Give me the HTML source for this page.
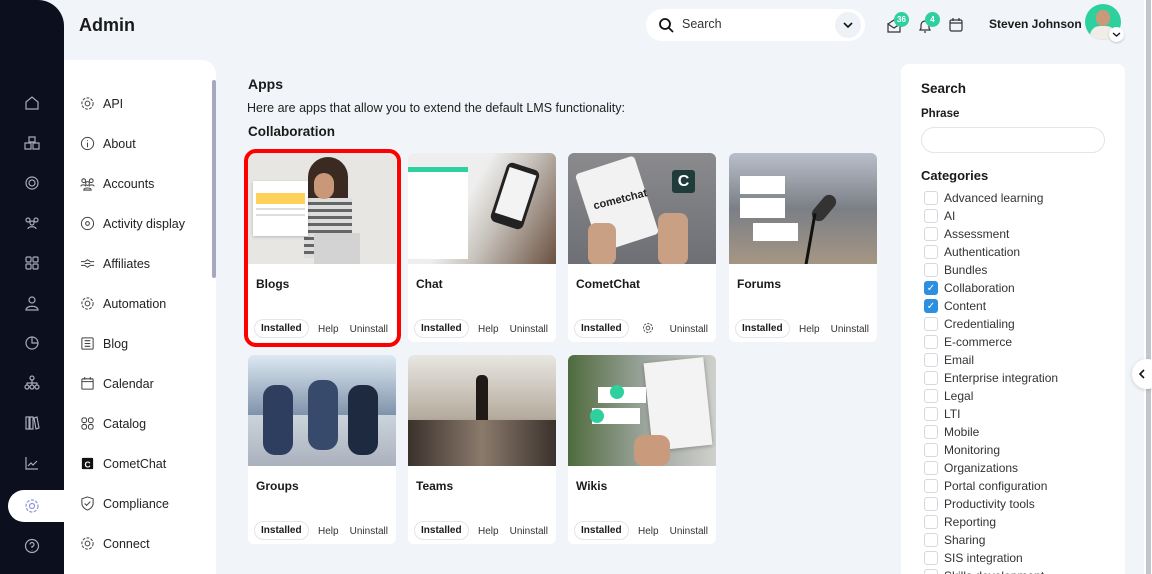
<!DOCTYPE html>
<html><head><meta charset="utf-8"><style>
*{box-sizing:border-box;margin:0;padding:0}
html,body{width:1152px;height:574px;overflow:hidden}
body{background:#f1f4f8;font-family:"Liberation Sans",sans-serif;color:#1a1a1a;position:relative}
.side{position:absolute;left:0;top:0;width:64px;height:574px;background:#0b0f1e;border-top-right-radius:26px}
.side svg{position:absolute;left:24px}
.act{position:absolute;left:8px;top:490px;width:56px;height:32px;background:#fff;border-radius:16px 0 0 16px}
.h1{position:absolute;left:79px;top:15px;font-size:18px;font-weight:bold}
.menu{position:absolute;left:64px;top:60px;width:152px;height:514px;background:#fff;border-top-right-radius:14px}
.mi{position:absolute;left:16px;font-size:12.5px;font-weight:500;display:flex;align-items:center;gap:8px;color:#222}
.mi svg{width:15px;height:15px}
.sb{position:absolute;left:212px;top:80px;width:4px;height:198px;background:#a6a9bd;border-radius:2px}
.srch{position:absolute;left:646px;top:9px;width:219px;height:32px;background:#fff;border-radius:16px;font-size:12.5px;color:#333}
.card{position:absolute;width:148px;height:189px;background:#fff;border-radius:6px;overflow:hidden}
.img{height:111px;position:relative;overflow:hidden}
.ct{position:absolute;left:8px;top:124px;font-weight:bold;font-size:12px}
.ins{position:absolute;left:6px;top:166px;border:1px solid #e2e4ee;border-radius:12px;font-size:10px;font-weight:bold;padding:3px 6px}
.hl{position:absolute;left:70px;top:171px;font-size:10px;color:#333}
.un{position:absolute;right:8px;top:171px;font-size:10px;color:#333}
.rp{position:absolute;left:901px;top:64px;width:224px;height:520px;background:#fff;border-radius:8px;overflow:hidden}
.cat{position:absolute;left:23px;font-size:12px;color:#333;display:flex;align-items:center;gap:6px}
.cb{width:14px;height:14px;border:1px solid #d6d8e0;border-radius:3px;background:#fff}
.cb.on{background:#2d8fe0;border-color:#2d8fe0;color:#fff;font-size:10px;text-align:center;line-height:13px}
</style></head><body>
<div class="side">
<div class="act"></div>
<svg style="top:95px" width="16" height="16" viewBox="0 0 16 16" fill="none" stroke="#aab" stroke-width="1.2"><path d="M2 7L8 2l6 5v7H2z"/></svg>
<svg style="top:135px" width="16" height="16" viewBox="0 0 16 16" fill="none" stroke="#aab" stroke-width="1.2"><path d="M5 2h6v5H5zM1 8h6v6H1zM9 8h6v6H9z"/></svg>
<svg style="top:175px" width="16" height="16" viewBox="0 0 16 16" fill="none" stroke="#aab" stroke-width="1.2"><circle cx="8" cy="8" r="6"/><circle cx="8" cy="8" r="3"/></svg>
<svg style="top:215px" width="16" height="16" viewBox="0 0 16 16" fill="none" stroke="#aab" stroke-width="1.2"><circle cx="4" cy="5" r="2"/><circle cx="12" cy="5" r="2"/><circle cx="8" cy="8" r="2"/><path d="M4 14c0-3 8-3 8 0"/></svg>
<svg style="top:255px" width="16" height="16" viewBox="0 0 16 16" fill="none" stroke="#aab" stroke-width="1.2"><rect x="2" y="2" width="5" height="5" rx="1"/><rect x="9" y="2" width="5" height="5" rx="1"/><rect x="2" y="9" width="5" height="5" rx="1"/><rect x="9" y="9" width="5" height="5" rx="1"/></svg>
<svg style="top:295px" width="16" height="16" viewBox="0 0 16 16" fill="none" stroke="#aab" stroke-width="1.2"><circle cx="8" cy="5" r="3"/><path d="M2 15c0-5 12-5 12 0z"/></svg>
<svg style="top:335px" width="16" height="16" viewBox="0 0 16 16" fill="none" stroke="#aab" stroke-width="1.2"><circle cx="8" cy="8" r="6"/><path d="M8 2v6h6"/></svg>
<svg style="top:375px" width="16" height="16" viewBox="0 0 16 16" fill="none" stroke="#aab" stroke-width="1.2"><circle cx="8" cy="3" r="2"/><circle cx="3" cy="12" r="2"/><circle cx="8" cy="12" r="2"/><circle cx="13" cy="12" r="2"/><path d="M8 5v5M3 10V8h10v2"/></svg>
<svg style="top:415px" width="16" height="16" viewBox="0 0 16 16" fill="none" stroke="#aab" stroke-width="1.2"><path d="M2 2h3v12H2zM6 2h3v12H6zM10 3l3-1 2 11-3 1z"/></svg>
<svg style="top:455px" width="16" height="16" viewBox="0 0 16 16" fill="none" stroke="#aab" stroke-width="1.2"><path d="M2 2v12h12M4 11l3-3 2 2 4-4"/></svg>
<svg style="top:498px" width="16" height="16" viewBox="0 0 16 16" fill="none" stroke="#8f95d6" stroke-width="1.2"><circle cx="8" cy="8" r="2.5"/><circle cx="8" cy="8" r="6" stroke-dasharray="3 1.5"/></svg>
<svg style="top:538px" width="16" height="16" viewBox="0 0 16 16" fill="none" stroke="#aab" stroke-width="1.2"><circle cx="8" cy="8" r="6.5"/><path d="M6 6.5a2 2 0 1 1 2 2v1.5M8 12v.5"/></svg>
</div>
<div class="h1">Admin</div>
<div class="menu">
<div class="mi" style="top:36px"><svg viewBox="0 0 16 16" fill="none" stroke="#444" stroke-width="1.1"><circle cx="8" cy="8" r="2.5"/><circle cx="8" cy="8" r="6" stroke-dasharray="3 1.5"/></svg>API</div>
<div class="mi" style="top:76px"><svg viewBox="0 0 16 16" fill="none" stroke="#444" stroke-width="1.1"><circle cx="8" cy="8" r="6.5"/><path d="M8 7v5M8 4.5v1"/></svg>About</div>
<div class="mi" style="top:116px"><svg viewBox="0 0 16 16" fill="none" stroke="#444" stroke-width="1.1"><circle cx="4" cy="5" r="2"/><circle cx="12" cy="5" r="2"/><circle cx="8" cy="8" r="2"/><path d="M1 11c0-2 5-2 5 0M10 11c0-2 5-2 5 0M4 15c0-3 8-3 8 0z"/></svg>Accounts</div>
<div class="mi" style="top:156px"><svg viewBox="0 0 16 16" fill="none" stroke="#444" stroke-width="1.1"><circle cx="8" cy="8" r="6.5"/><circle cx="8" cy="8" r="2"/></svg>Activity display</div>
<div class="mi" style="top:196px"><svg viewBox="0 0 16 16" fill="none" stroke="#444" stroke-width="1.1"><path d="M1 6h4l3-2 3 2h4M1 10h4l3 2 3-2h4M5 8h6"/></svg>Affiliates</div>
<div class="mi" style="top:236px"><svg viewBox="0 0 16 16" fill="none" stroke="#444" stroke-width="1.1"><circle cx="8" cy="8" r="2.5"/><circle cx="8" cy="8" r="6" stroke-dasharray="3 1.5"/></svg>Automation</div>
<div class="mi" style="top:276px"><svg viewBox="0 0 16 16" fill="none" stroke="#444" stroke-width="1.1"><rect x="2" y="2" width="12" height="12" rx="1"/><path d="M5 5h6M5 8h6M5 11h6"/></svg>Blog</div>
<div class="mi" style="top:316px"><svg viewBox="0 0 16 16" fill="none" stroke="#444" stroke-width="1.1"><rect x="2" y="3" width="12" height="11" rx="1"/><path d="M2 6h12M5 1v3M11 1v3"/></svg>Calendar</div>
<div class="mi" style="top:356px"><svg viewBox="0 0 16 16" fill="none" stroke="#444" stroke-width="1.1"><rect x="2" y="2" width="5" height="5" rx="2"/><rect x="9" y="2" width="5" height="5" rx="2"/><rect x="2" y="9" width="5" height="5" rx="2"/><rect x="9" y="9" width="5" height="5" rx="2"/></svg>Catalog</div>
<div class="mi" style="top:396px"><svg viewBox="0 0 16 16"><rect x="2" y="2" width="12" height="12" rx="1" fill="#111"/><text x="8" y="12" font-size="9" fill="#fff" text-anchor="middle" font-weight="bold" font-family="Liberation Sans">C</text></svg>CometChat</div>
<div class="mi" style="top:436px"><svg viewBox="0 0 16 16" fill="none" stroke="#444" stroke-width="1.1"><path d="M8 1l6 2v5c0 3-3 6-6 7-3-1-6-4-6-7V3z"/><path d="M5 8l2 2 4-4"/></svg>Compliance</div>
<div class="mi" style="top:476px"><svg viewBox="0 0 16 16" fill="none" stroke="#444" stroke-width="1.1"><circle cx="8" cy="8" r="2.5"/><circle cx="8" cy="8" r="6" stroke-dasharray="3 1.5"/></svg>Connect</div>
</div>
<div class="sb"></div>
<div class="srch"><svg style="position:absolute;left:12px;top:8px" width="16" height="16" viewBox="0 0 16 16" fill="none" stroke="#111" stroke-width="1.8"><circle cx="7" cy="7" r="5"/><path d="M11 11l4 4"/></svg><span style="position:absolute;left:36px;top:8px">Search</span><div style="position:absolute;right:4px;top:3px;width:26px;height:26px;border-radius:13px;background:#eef1f6"></div><svg style="position:absolute;right:11px;top:11px" width="12" height="10" viewBox="0 0 12 10" fill="none" stroke="#111" stroke-width="1.6"><path d="M2 3l4 4 4-4"/></svg></div>
<svg style="position:absolute;left:886px;top:18px" width="16" height="16" viewBox="0 0 16 16" fill="none" stroke="#333" stroke-width="1.2"><path d="M2 6l6 4 6-4v8H2z M2 6l6-4 6 4"/></svg>
<div style="position:absolute;left:894px;top:12px;width:15px;height:15px;border-radius:8px;background:#2ed19d;color:#fff;font-size:8px;font-weight:bold;text-align:center;line-height:15px">36</div>
<svg style="position:absolute;left:917px;top:18px" width="16" height="16" viewBox="0 0 16 16" fill="none" stroke="#333" stroke-width="1.2"><path d="M3 12h10l-1-2V7a4 4 0 0 0-8 0v3zM7 14h2"/></svg>
<div style="position:absolute;left:925px;top:12px;width:15px;height:15px;border-radius:8px;background:#2ed19d;color:#fff;font-size:8px;font-weight:bold;text-align:center;line-height:15px">4</div>
<svg style="position:absolute;left:948px;top:17px" width="16" height="16" viewBox="0 0 16 16" fill="none" stroke="#333" stroke-width="1.2"><rect x="2" y="3" width="12" height="11" rx="1.5"/><path d="M2 6h12M5 1v3M11 1v3"/></svg>
<div style="position:absolute;left:989px;top:17px;font-size:12px;font-weight:bold">Steven Johnson</div>
<div style="position:absolute;left:1085px;top:4px;width:36px;height:36px;border-radius:18px;background:#2ed19d;overflow:hidden"><div style="position:absolute;left:11px;top:6px;width:14px;height:16px;border-radius:7px;background:#c89a7a"></div><div style="position:absolute;left:5px;top:22px;width:26px;height:20px;border-radius:10px 10px 0 0;background:#f0ece6"></div></div>
<div style="position:absolute;left:1109px;top:27px;width:15px;height:15px;border-radius:8px;background:#fff;box-shadow:0 1px 2px rgba(0,0,0,.2)"><svg style="position:absolute;left:3px;top:4px" width="9" height="7" viewBox="0 0 9 7" fill="none" stroke="#111" stroke-width="1.3"><path d="M1 2l3.5 3L8 2"/></svg></div>
<div style="position:absolute;left:1144px;top:0;width:8px;height:574px;background:#fff"></div>
<div style="position:absolute;left:1146px;top:0;width:5px;height:574px;background:#c4c6ce"></div>

<div style="position:absolute;left:248px;top:76px;font-size:14px;font-weight:bold">Apps</div>
<div style="position:absolute;left:247px;top:101px;font-size:12.5px;color:#222">Here are apps that allow you to extend the default LMS functionality:</div>
<div style="position:absolute;left:248px;top:124px;font-size:13.5px;font-weight:bold">Collaboration</div>

<div class="card" style="left:248px;top:153px"><div class="img" style="background:#e7e6e3"><div style="position:absolute;left:60px;top:4px;width:40px;height:90px;border-radius:20px 20px 0 0;background:#3a2a22"></div><div style="position:absolute;left:56px;top:45px;width:48px;height:60px;background:repeating-linear-gradient(#ddd 0 4px,#666 4px 7px)"></div><div style="position:absolute;left:66px;top:20px;width:20px;height:26px;border-radius:10px;background:#c99879"></div><div style="position:absolute;left:66px;top:80px;width:46px;height:31px;background:#d3d3d3"></div><div style="position:absolute;left:5px;top:28px;width:55px;height:55px;background:#fff;box-shadow:0 1px 3px rgba(0,0,0,.2)"><div style="margin:12px 3px 0;height:11px;background:#ffd15a"></div><div style="margin:4px 3px;height:2px;background:#ddd"></div><div style="margin:4px 3px;height:2px;background:#ddd"></div></div></div><div class="ct">Blogs</div><div class="ins">Installed</div><div class="hl">Help</div><div class="un">Uninstall</div></div>
<div style="position:absolute;left:244px;top:149px;width:157px;height:198px;border:4px solid #f00;border-radius:12px"></div>

<div class="card" style="left:408px;top:153px"><div class="img" style="background:linear-gradient(120deg,#eee 40%,#c7c2bb 60%,#6a5040)"><div style="position:absolute;left:0;top:14px;width:60px;height:92px;background:#fff;border-top:5px solid #2ed19d"></div><div style="position:absolute;left:90px;top:12px;width:34px;height:62px;border-radius:6px;background:#222;transform:rotate(18deg)"><div style="margin:5px 3px;height:48px;background:#f3f3f3"></div></div></div><div class="ct">Chat</div><div class="ins">Installed</div><div class="hl">Help</div><div class="un">Uninstall</div></div>

<div class="card" style="left:568px;top:153px"><div class="img" style="background:linear-gradient(#8b8b8e,#6d6f74)"><div style="position:absolute;left:18px;top:10px;width:62px;height:82px;border-radius:4px;background:#f2f2f2;transform:rotate(-18deg)"><div style="position:absolute;left:8px;top:32px;font-size:11px;font-weight:bold;color:#222;transform:rotate(4deg)">cometchat</div></div><div style="position:absolute;left:104px;top:17px;width:23px;height:23px;border-radius:3px;background:#1f3b3a;color:#fff;font-weight:bold;font-size:16px;text-align:center;line-height:23px">C</div><div style="position:absolute;left:20px;top:70px;width:28px;height:42px;border-radius:8px;background:#caa084"></div><div style="position:absolute;left:90px;top:60px;width:30px;height:52px;border-radius:8px;background:#caa084"></div></div><div class="ct">CometChat</div><div class="ins">Installed</div><svg style="position:absolute;left:74px;top:169px" width="12" height="12" viewBox="0 0 16 16" fill="none" stroke="#555" stroke-width="1.3"><circle cx="8" cy="8" r="2.5"/><circle cx="8" cy="8" r="6" stroke-dasharray="3 1.5"/></svg><div class="un">Uninstall</div></div>

<div class="card" style="left:729px;top:153px"><div class="img" style="background:linear-gradient(#b9bfca,#7b7f86 50%,#a59683)"><div style="position:absolute;left:11px;top:23px;width:45px;height:18px;background:#fff"></div><div style="position:absolute;left:11px;top:45px;width:45px;height:20px;background:#fff"></div><div style="position:absolute;left:24px;top:70px;width:45px;height:18px;background:#fff"></div><div style="position:absolute;left:88px;top:40px;width:14px;height:30px;border-radius:7px;background:#333;transform:rotate(40deg)"></div><div style="position:absolute;left:80px;top:60px;width:3px;height:52px;background:#111;transform:rotate(10deg)"></div></div><div class="ct">Forums</div><div class="ins">Installed</div><div class="hl">Help</div><div class="un">Uninstall</div></div>

<div class="card" style="left:248px;top:355px"><div class="img" style="background:linear-gradient(#dde8f2,#8699b0 50%,#2c3d5a)"><div style="position:absolute;left:0;top:60px;width:148px;height:51px;background:#fff;opacity:.6"></div><div style="position:absolute;left:15px;top:30px;width:30px;height:70px;border-radius:12px;background:#2d3e5f"></div><div style="position:absolute;left:60px;top:25px;width:30px;height:70px;border-radius:12px;background:#384a6b"></div><div style="position:absolute;left:100px;top:30px;width:30px;height:70px;border-radius:12px;background:#1e2a40"></div></div><div class="ct">Groups</div><div class="ins">Installed</div><div class="hl">Help</div><div class="un">Uninstall</div></div>

<div class="card" style="left:408px;top:355px"><div class="img" style="background:linear-gradient(#e9e7e2,#b7ada0 55%,#5b4e44)"><div style="position:absolute;left:68px;top:20px;width:12px;height:55px;border-radius:5px;background:#1f1a18"></div><div style="position:absolute;left:0;top:65px;width:148px;height:46px;background:linear-gradient(90deg,#3b322c,#8a7a6c,#3b322c)"></div></div><div class="ct">Teams</div><div class="ins">Installed</div><div class="hl">Help</div><div class="un">Uninstall</div></div>

<div class="card" style="left:568px;top:355px"><div class="img" style="background:linear-gradient(90deg,#4f6b3d,#9aa39a 50%,#cfd0cc)"><div style="position:absolute;left:80px;top:5px;width:60px;height:88px;background:#f3f3f3;transform:rotate(-6deg);box-shadow:0 1px 4px rgba(0,0,0,.3)"></div><div style="position:absolute;left:30px;top:32px;width:48px;height:16px;background:#fff"></div><div style="position:absolute;left:42px;top:30px;width:14px;height:14px;border-radius:7px;background:#2ed19d"></div><div style="position:absolute;left:24px;top:53px;width:48px;height:16px;background:#fff"></div><div style="position:absolute;left:22px;top:54px;width:14px;height:14px;border-radius:7px;background:#2ed19d"></div><div style="position:absolute;left:66px;top:80px;width:36px;height:31px;border-radius:10px;background:#c99b7c"></div></div><div class="ct">Wikis</div><div class="ins">Installed</div><div class="hl">Help</div><div class="un">Uninstall</div></div>

<div class="rp">
<div style="position:absolute;left:20px;top:17px;font-size:13.5px;font-weight:bold">Search</div>
<div style="position:absolute;left:20px;top:44px;font-size:11.5px;font-weight:bold">Phrase</div>
<div style="position:absolute;left:20px;top:63px;width:184px;height:26px;border:1px solid #e2e4ee;border-radius:13px"></div>
<div style="position:absolute;left:20px;top:104px;font-size:13px;font-weight:bold">Categories</div>
<div class="cat" style="top:127px"><div class="cb"></div>Advanced learning</div>
<div class="cat" style="top:145px"><div class="cb"></div>AI</div>
<div class="cat" style="top:163px"><div class="cb"></div>Assessment</div>
<div class="cat" style="top:181px"><div class="cb"></div>Authentication</div>
<div class="cat" style="top:199px"><div class="cb"></div>Bundles</div>
<div class="cat" style="top:217px"><div class="cb on">✓</div>Collaboration</div>
<div class="cat" style="top:235px"><div class="cb on">✓</div>Content</div>
<div class="cat" style="top:253px"><div class="cb"></div>Credentialing</div>
<div class="cat" style="top:271px"><div class="cb"></div>E-commerce</div>
<div class="cat" style="top:289px"><div class="cb"></div>Email</div>
<div class="cat" style="top:307px"><div class="cb"></div>Enterprise integration</div>
<div class="cat" style="top:325px"><div class="cb"></div>Legal</div>
<div class="cat" style="top:343px"><div class="cb"></div>LTI</div>
<div class="cat" style="top:361px"><div class="cb"></div>Mobile</div>
<div class="cat" style="top:379px"><div class="cb"></div>Monitoring</div>
<div class="cat" style="top:397px"><div class="cb"></div>Organizations</div>
<div class="cat" style="top:415px"><div class="cb"></div>Portal configuration</div>
<div class="cat" style="top:433px"><div class="cb"></div>Productivity tools</div>
<div class="cat" style="top:451px"><div class="cb"></div>Reporting</div>
<div class="cat" style="top:469px"><div class="cb"></div>Sharing</div>
<div class="cat" style="top:487px"><div class="cb"></div>SIS integration</div>
<div class="cat" style="top:505px"><div class="cb"></div>Skills development</div>
</div>
<div style="position:absolute;left:1132px;top:359px;width:30px;height:30px;border-radius:15px;background:#fff;box-shadow:0 1px 4px rgba(0,0,0,.15)"><svg style="position:absolute;left:6px;top:10px" width="8" height="10" viewBox="0 0 8 10" fill="none" stroke="#111" stroke-width="1.6"><path d="M6 1L2 5l4 4"/></svg></div>
</body></html>
